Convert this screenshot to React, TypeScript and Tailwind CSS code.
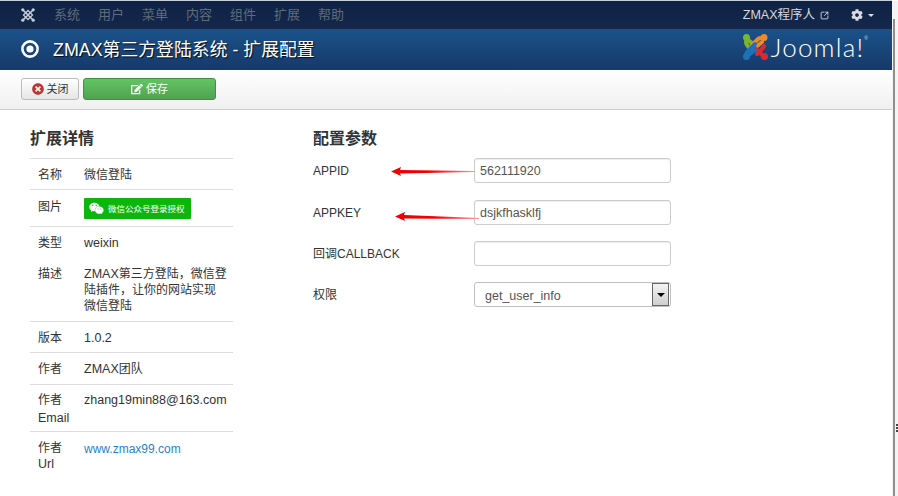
import { SquareArrowOutUpRight } from "lucide-react";
import { FaCog, FaEdit, FaTimesCircle, FaWeixin } from "react-icons/fa";

const font = "font-['Liberation_Sans','Noto_Sans_CJK_SC',sans-serif]";
const latin = "text-[12.5px]";

const menu = ["系统", "用户", "菜单", "内容", "组件", "扩展", "帮助"];

function NavLogo() {
  return (
    <svg width="16" height="16" viewBox="0 0 16 16" fill="none" stroke="#c4ccd6">
      <path d="M3 3 L13 13 M13 3 L3 13" strokeWidth="1.6" />
      <path d="M8 3.5 L12.5 8 L8 12.5 L3.5 8 Z" strokeWidth="1.3" />
      <circle cx="2.8" cy="2.8" r="1.6" fill="#c4ccd6" stroke="none" />
      <circle cx="13.2" cy="2.8" r="1.6" fill="#c4ccd6" stroke="none" />
      <circle cx="2.8" cy="13.2" r="1.6" fill="#c4ccd6" stroke="none" />
      <circle cx="13.2" cy="13.2" r="1.6" fill="#c4ccd6" stroke="none" />
    </svg>
  );
}

function JoomlaMark() {
  return (
    <svg width="27" height="28" viewBox="0 0 27 28" fill="none" strokeWidth="4" strokeLinecap="round">
      <path d="M9 17 L5 12 Q3 9 5 6 L11 11 L14 14" stroke="#7ab530" />
      <circle cx="4.5" cy="4.5" r="3.5" fill="#7ab530" />
      <path d="M10 12 L16 6 Q19 4 21 6" stroke="#f08a24" />
      <path d="M14 14 L20 9" stroke="#f08a24" />
      <circle cx="22" cy="4.5" r="3.5" fill="#f08a24" />
      <path d="M13 15 L19 21 Q21 23 22 23" stroke="#e0272c" />
      <path d="M15 21 L19 17 Q21 15 22 13" stroke="#e0272c" />
      <circle cx="22.5" cy="23.5" r="3.5" fill="#e0272c" />
      <path d="M13 11 L7 17 Q4 20 4 22" stroke="#1c72b8" />
      <path d="M8 21 L13 17" stroke="#1c72b8" />
      <circle cx="4.5" cy="23.5" r="3.5" fill="#1c72b8" />
    </svg>
  );
}

function Row({ label, className, children }: { label: React.ReactNode; className: string; children: React.ReactNode }) {
  return (
    <div className={`flex border-t border-[#ddd] pl-2 ${className}`}>
      <div className="w-[46px] shrink-0">{label}</div>
      <div className="whitespace-nowrap">{children}</div>
    </div>
  );
}

function Arrow({ id, className, tail }: { id: string; className: string; tail: number }) {
  return (
    <svg className={`absolute ${className}`} width="86" height="10" viewBox="0 0 86 10">
      <defs>
        <linearGradient id={id} x1="0" y1="0" x2="86" y2="0" gradientUnits="userSpaceOnUse">
          <stop offset="0.45" stopColor="#f00000" />
          <stop offset="1" stopColor="#f8a0a0" />
        </linearGradient>
      </defs>
      <path d={`M0 4.5 L10 0 L9 3 L84 ${tail} L84 ${tail + 1} L9 6.5 L10 9 Z`} fill={`url(#${id})`} />
    </svg>
  );
}

function Field({ label, value, className }: { label: React.ReactNode; value?: string; className: string }) {
  return (
    <div className={`flex items-center h-[25px] ${className}`}>
      <div className="w-[161px] shrink-0">{label}</div>
      <input
        readOnly
        value={value ?? ""}
        className="w-[197px] h-[25px] px-[5px] border border-[#ccc] rounded-[3px] bg-white text-[12.5px] text-[#555] shadow-[inset_0_1px_1px_rgba(0,0,0,0.075)] outline-none"
      />
    </div>
  );
}

export default function App() {
  return (
    <div className={`${font} relative flex w-[898px] h-[496px] overflow-hidden bg-white text-[12px] leading-[18px] text-[#333]`}>
      <div className="w-[892px] shrink-0">
        <div className="h-px bg-[#c5d0dc]" />
        {/* top menu */}
        <div className="flex items-center h-[28px] bg-gradient-to-b from-[#0f2244] to-[#14284c]">
          <div className="ml-[20px] mr-[18px] flex">
            <NavLogo />
          </div>
          <div className="flex gap-[18px] text-[13px] text-[#5e6b7c]">
            {menu.map((m) => (
              <span key={m}>{m}</span>
            ))}
          </div>
          <div className="ml-auto flex items-center text-[12.5px] text-[#d4d8de]">
            <span>ZMAX程序人</span>
            <SquareArrowOutUpRight className="ml-[5px] w-[9px] h-[9px]" strokeWidth={2.4} />
            <FaCog className="ml-[22px] w-[12px] h-[12px] text-[#d8dce2]" />
            <span className="ml-[5px] mr-[18px] w-0 h-0 border-x-[3px] border-x-transparent border-t-[3px] border-t-[#d8dce2]" />
          </div>
        </div>
        {/* title bar */}
        <div className="flex items-center h-[41px] bg-gradient-to-b from-[#1a5289] to-[#17396b]">
          <svg className="ml-[20px] mr-[12px]" width="21" height="21" viewBox="0 0 21 21" fill="none">
            <circle cx="10" cy="10" r="7.6" stroke="#fff" strokeWidth="2.6" />
            <circle cx="10" cy="10" r="3.6" fill="#fff" />
          </svg>
          <h1 className="text-[17.85px] text-white [text-shadow:1px_1px_1px_rgba(0,0,0,0.8)]">ZMAX第三方登陆系统 - 扩展配置</h1>
          <div className="ml-auto mr-[24px] mb-[5px] flex items-center">
            <JoomlaMark />
            <span className="ml-[2px] font-['Lato',sans-serif] font-light text-[26px] leading-none tracking-[1.2px] text-white">Joomla!</span>
            <span className="self-start mt-[3px] text-[5px] leading-none text-[#c8d4e0]">®</span>
          </div>
        </div>
        {/* toolbar */}
        <div className="flex items-center gap-[4px] h-[40px] pl-[21px] pb-[2px] bg-gradient-to-b from-white to-[#f0f0f0] border-b border-[#d0d0d0]">
          <button className="flex items-center justify-center gap-[3px] w-[58px] h-[22px] rounded-[3px] border border-[#bbb] bg-gradient-to-b from-white to-[#e6e6e6] text-[11px] text-[#333]">
            <FaTimesCircle className="w-[12px] h-[12px] text-[#bd362f]" />
            关闭
          </button>
          <button className="flex items-center justify-center gap-[3px] w-[133px] h-[22px] rounded-[3px] border border-[#3f923f] bg-gradient-to-b from-[#62c462] to-[#51a351] text-[11px] text-white">
            <FaEdit className="w-[12px] h-[12px]" />
            保存
          </button>
        </div>
        {/* body */}
        <div className="flex pl-[30px]">
          <div className="w-[203px] shrink-0">
            <h2 className="mt-[20px] mb-[10px] h-[18px] text-[16px] leading-[18px] font-bold">扩展详情</h2>
            <Row label="名称" className="h-[31px] pt-[7px]">微信登陆</Row>
            <Row label="图片" className="h-[37px] pt-[8px]">
              <div className="flex items-center w-[107px] h-[21px] rounded-[1px] bg-[#0ab70a] pl-[5px] text-[8.5px] text-white">
                <FaWeixin className="w-[15px] h-[15px] mr-[4px]" />
                微信公众号登录授权
              </div>
            </Row>
            <Row label="类型" className="h-[31px] pt-[7px]"><span className={latin}>weixin</span></Row>
            <div className="flex h-[64px] pl-2 pt-[9px] leading-[16px]">
              <div className="w-[46px] shrink-0">描述</div>
              <div>
                <span className={latin}>ZMAX</span>第三方登陆，微信登
                <br />
                陆插件，让你的网站实现
                <br />
                微信登陆
              </div>
            </div>
            <Row label="版本" className="h-[31px] pt-[7px]"><span className={latin}>1.0.2</span></Row>
            <Row label="作者" className="h-[32px] pt-[7px]"><span className={latin}>ZMAX</span>团队</Row>
            <Row label={<span className="block leading-[18px]">作者<br /><span className={latin}>Email</span></span>} className="h-[47px] pt-[6px]">
              <span className={latin}>zhang19min88@163.com</span>
            </Row>
            <Row label={<span className="block leading-[16px]">作者<br /><span className={latin}>Url</span></span>} className="h-[60px] pt-[8px]">
              <span className="text-[#1f83d0]">www.zmax99.com</span>
            </Row>
          </div>
          <div className="relative ml-[80px]">
            <h2 className="mt-[20px] mb-[10px] h-[18px] text-[16px] leading-[18px] font-bold">配置参数</h2>
            <Field label="APPID" value="562111920" className="mb-[17px]" />
            <Field label="APPKEY" value="dsjkfhasklfj" className="mb-[16px]" />
            <Field label="回调CALLBACK" className="mb-[16px]" />
            <div className="flex items-center h-[25px]">
              <div className="w-[161px] shrink-0">权限</div>
              <div className="flex items-center justify-between w-[197px] h-[25px] pl-[10px] pr-px border border-[#c0c0c0] rounded-[3px] text-[12.5px] text-[#555]">
                <span className="mt-[2px]">get_user_info</span>
                <span className="flex items-center justify-center w-[17px] h-[23px] border border-[#666] bg-gradient-to-b from-[#f4f4f4] to-[#cfcfcf]">
                  <span className="w-0 h-0 border-x-[4px] border-x-transparent border-t-[4px] border-t-black" />
                </span>
              </div>
            </div>
            <Arrow id="arrow-appid" className="left-[78px] top-[57px]" tail={4} />
            <Arrow id="arrow-appkey" className="left-[82px] top-[102px]" tail={6} />
          </div>
        </div>
      </div>
      {/* edge of the neighbouring window */}
      <div className="flex-1 bg-[#f4f4f4] mt-[1px]" />
      <div className="absolute left-[893px] top-[19px] bottom-0 w-[2px] bg-[#8e8e8e]" />
      <div className="absolute left-[896px] top-[424px] flex flex-col gap-[1px]">
        <span className="w-[2px] h-[2px] bg-[#444]" />
        <span className="w-[2px] h-[2px] bg-[#444]" />
        <span className="w-[2px] h-[2px] bg-[#444]" />
      </div>
    </div>
  );
}
